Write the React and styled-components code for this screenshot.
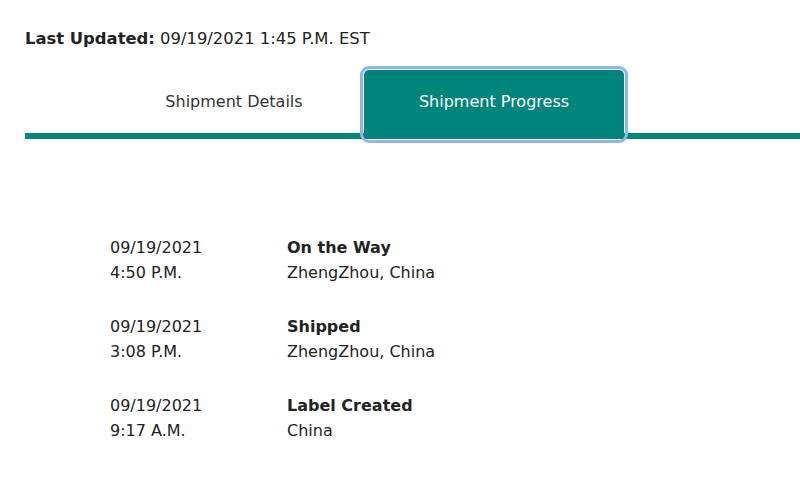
import React from "react";
import styled, { createGlobalStyle } from "styled-components";

const Global = createGlobalStyle`
  html, body { margin: 0; padding: 0; background: #fff; }
  body { font-family: "DejaVu Sans", Verdana, sans-serif; color: #222; }
`;

const Page = styled.div`
  width: 800px;
  height: 491px;
  overflow: hidden;
  padding-top: 28px;
  box-sizing: border-box;
`;

const Updated = styled.div`
  padding-left: 25px;
  font-size: 16.4px;
  line-height: 21px;
  color: #222;
  b { font-weight: 700; }
`;

const TabBar = styled.div`
  margin-top: 21px;
  margin-left: 25px;
  display: flex;
  padding-left: 79px;
  border-bottom: 6px solid #00857a;
  height: 63px;
`;

const Tab = styled.button`
  width: 260px;
  border: none;
  background: ${(p) => (p.$active ? "#00857a" : "transparent")};
  color: ${(p) => (p.$active ? "#fff" : "#333")};
  font-family: inherit;
  font-size: 16px;
  padding: ${(p) => (p.$active ? "0 0 6px" : "0")};
  cursor: pointer;
  outline: ${(p) => (p.$active ? "3px solid #8fb3f2" : "none")};
  outline-offset: 1px;
  position: relative;
  z-index: 1;
  height: ${(p) => (p.$active ? "69px" : "63px")};
  border-radius: ${(p) => (p.$active ? "5px" : "0")};
`;

const Timeline = styled.div`
  margin-top: 96px;
  padding-left: 110px;
  display: flex;
  flex-direction: column;
  gap: 29px;
`;

const Row = styled.div`
  display: grid;
  grid-template-columns: 177px 1fr;
  font-size: 16px;
  line-height: 25px;
  color: #222;
`;

const Status = styled.div`
  font-weight: 700;
`;

const events = [
  { date: "09/19/2021", time: "4:50 P.M.", status: "On the Way", place: "ZhengZhou, China" },
  { date: "09/19/2021", time: "3:08 P.M.", status: "Shipped", place: "ZhengZhou, China" },
  { date: "09/19/2021", time: "9:17 A.M.", status: "Label Created", place: "China" },
];

export default function App() {
  return (
    <Page>
      <Global />
      <Updated>
        <b>Last Updated:</b> 09/19/2021 1:45 P.M. EST
      </Updated>
      <TabBar>
        <Tab>Shipment Details</Tab>
        <Tab $active>Shipment Progress</Tab>
      </TabBar>
      <Timeline>
        {events.map((e, i) => (
          <Row key={i}>
            <div>
              <div>{e.date}</div>
              <div>{e.time}</div>
            </div>
            <div>
              <Status>{e.status}</Status>
              <div>{e.place}</div>
            </div>
          </Row>
        ))}
      </Timeline>
    </Page>
  );
}
